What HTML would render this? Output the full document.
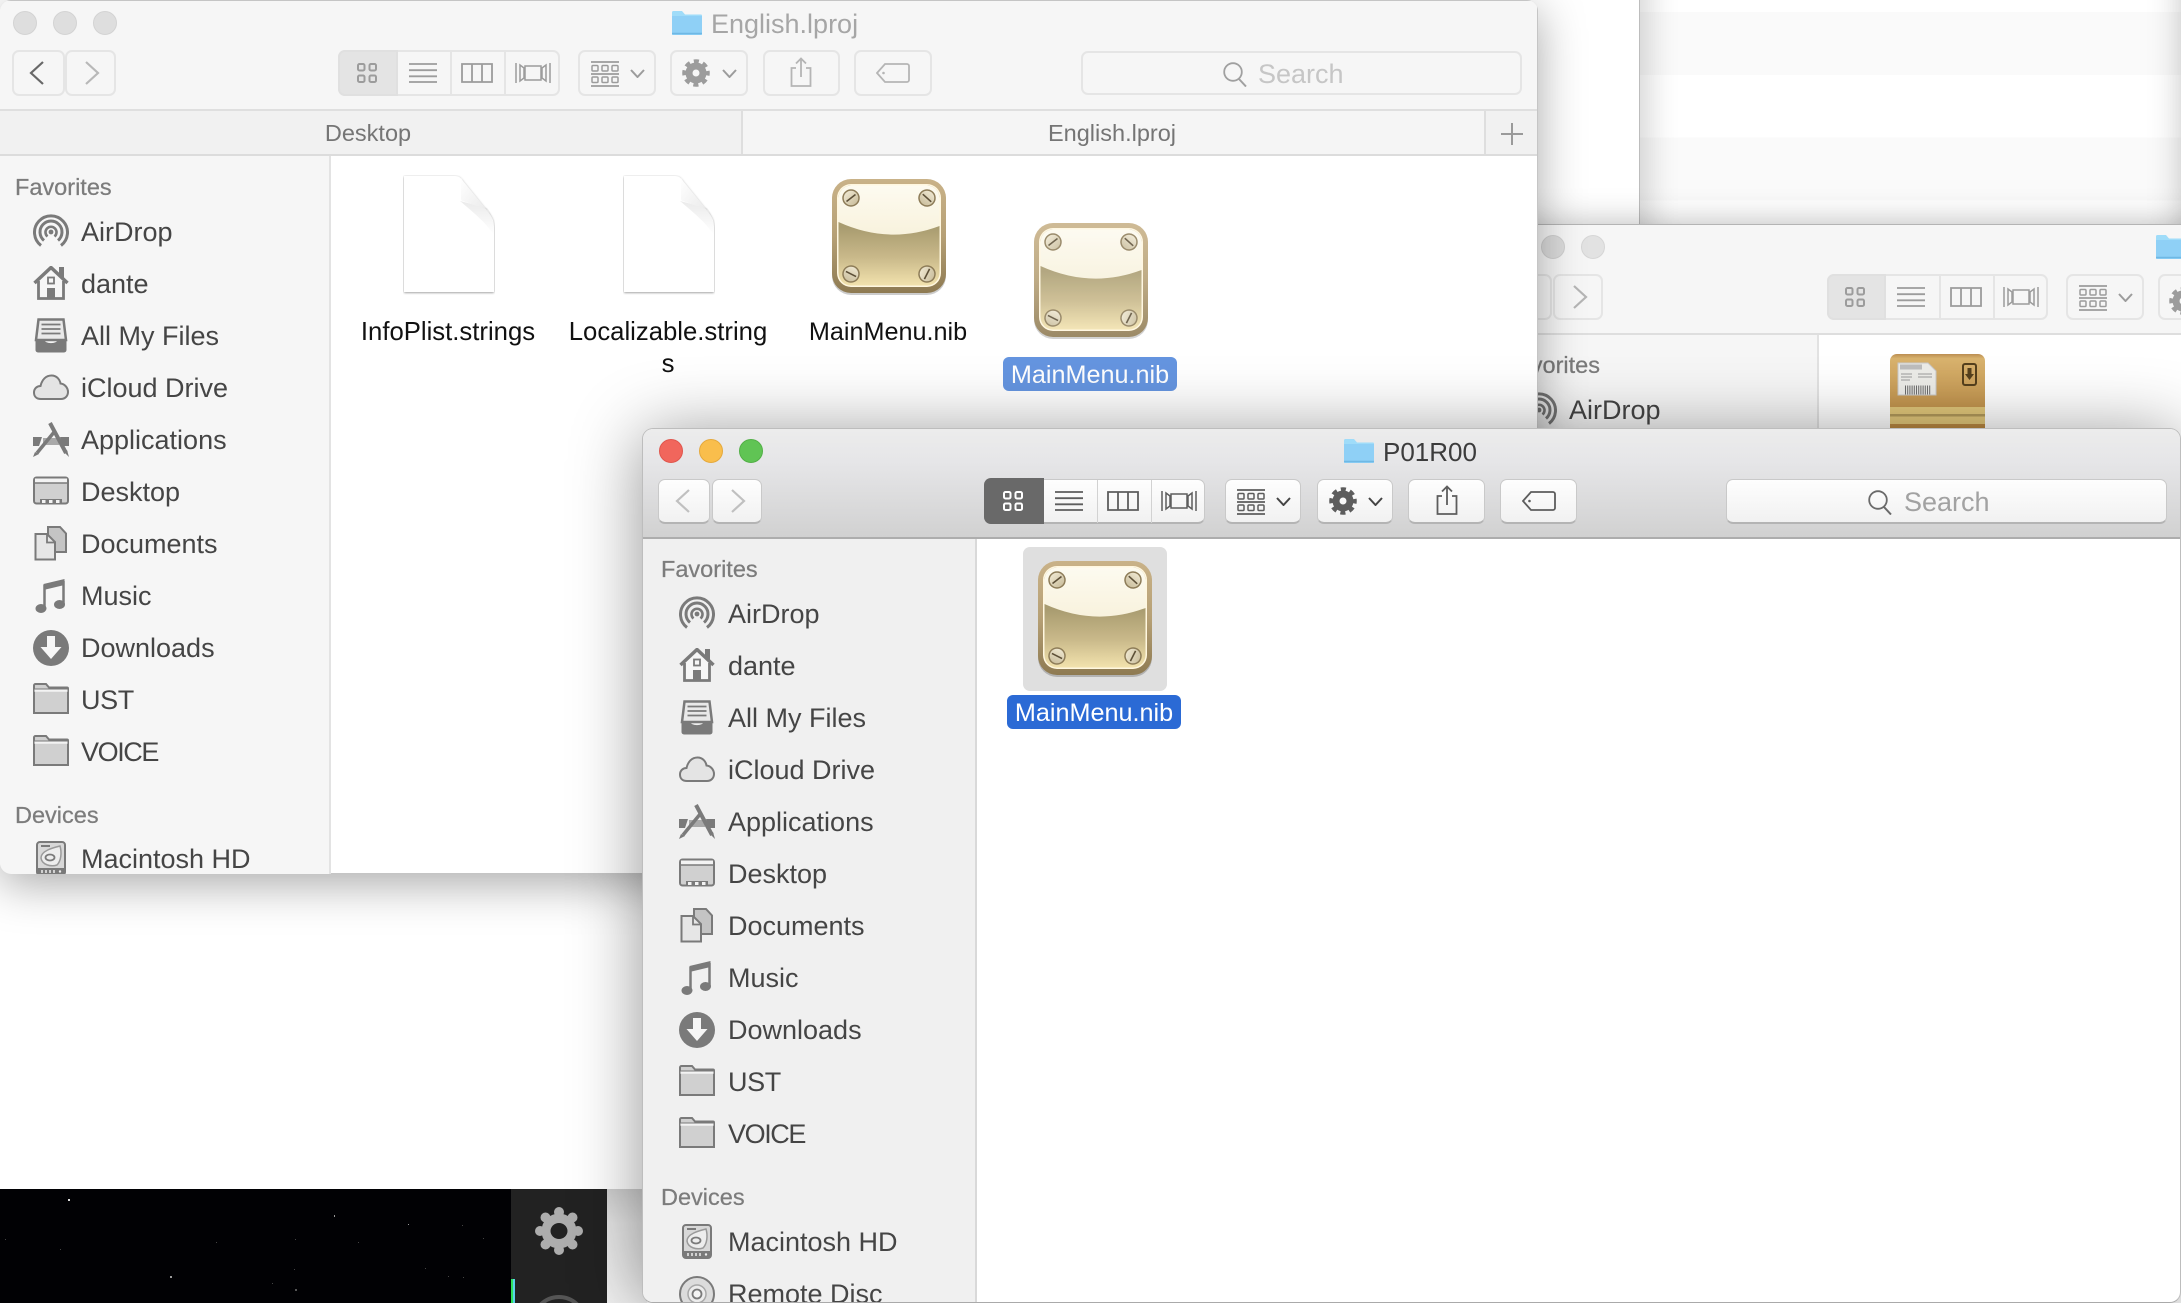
<!DOCTYPE html>
<html><head><meta charset="utf-8"><title>Finder</title>
<style>
html,body{margin:0;padding:0;background:#fff;width:2181px;height:1303px;overflow:hidden}
body{font-family:"Liberation Sans",sans-serif}
#root{position:absolute;left:0;top:0;width:2181px;height:1303px;overflow:hidden;background:#fff}
div,svg,span{box-sizing:border-box}
.a{position:absolute;display:block;overflow:visible}
.t{position:absolute;white-space:nowrap;line-height:36px;height:36px}
.c{transform:translateX(-50%)}
.frame{position:absolute;overflow:hidden;border-radius:11px}
.side{position:absolute;overflow:hidden}
.sec{position:absolute;font-size:23.5px;line-height:30px;color:#7c7c7c;-webkit-text-stroke:.25px #7c7c7c}
.rows{position:absolute;left:0;right:0}
.r{height:52px;position:relative;font-size:27px;line-height:52px;color:#454545;white-space:nowrap}
.r svg{position:absolute;width:36px;height:36px;top:8px;color:#7a7a7a;overflow:visible}
.r span{position:absolute;top:0}
.l1 svg{left:33px}.l1 span{left:81px}
.l3 svg{left:36px}.l3 span{left:85px}
.b{position:absolute;border-radius:7px;height:46px}
.i .b{background:#f6f6f6;border:2px solid #e5e5e5}
.f .b{background:linear-gradient(#fefefe,#f1f1f1);border:1px solid #c9c9c9;border-bottom:2px solid #b4b4b4;height:45px;top:479px}
.i{color:#9c9c9c}
.f{color:#5d5d5d}
</style></head><body><div id="root">
<svg width="0" height="0" style="position:absolute">
<defs>
<symbol id="grid" viewBox="0 0 20 20"><g fill="none" stroke="currentColor" stroke-width="2"><rect x="1" y="1" width="6.5" height="6.5" rx="1.5"/><rect x="12.5" y="1" width="6.5" height="6.5" rx="1.5"/><rect x="1" y="12.5" width="6.5" height="6.5" rx="1.5"/><rect x="12.5" y="12.5" width="6.5" height="6.5" rx="1.5"/></g></symbol>
<symbol id="list" viewBox="0 0 28 20"><path d="M0 1H28M0 7.200H28M0 13.300H28M0 19H28" stroke="currentColor" stroke-width="1.800" fill="none"/></symbol>
<symbol id="cols" viewBox="0 0 32 20"><path d="M1 1H31V19H1ZM11 1V19M21 1V19" stroke="currentColor" stroke-width="1.800" fill="none"/></symbol>
<symbol id="cov" viewBox="0 0 36 20"><path d="M10 3H26V17H10ZM1 0V20M5 2V18L9 15V5ZM35 0V20M31 2V18L27 15V5Z" stroke="currentColor" stroke-width="1.500" fill="none"/></symbol>
<symbol id="arr" viewBox="0 0 28 26"><path d="M0 1H28M0 13H28M0 25H28" stroke="currentColor" stroke-width="1.800" fill="none"/><g fill="none" stroke="currentColor" stroke-width="1.500"><rect x="1" y="4.500" width="6" height="5.500" rx="1"/><rect x="11" y="4.500" width="6" height="5.500" rx="1"/><rect x="21" y="4.500" width="6" height="5.500" rx="1"/><rect x="1" y="16" width="6" height="5.500" rx="1"/><rect x="11" y="16" width="6" height="5.500" rx="1"/><rect x="21" y="16" width="6" height="5.500" rx="1"/></g></symbol>
<symbol id="chev" viewBox="0 0 15 9"><path d="M1 1L7.500 8L14 1" stroke="currentColor" stroke-width="2" fill="none"/></symbol>
<symbol id="gear" viewBox="0 0 30 30"><circle cx="15" cy="15" r="7.500" fill="none" stroke="currentColor" stroke-width="7.500"/><circle cx="15" cy="15" r="12" fill="none" stroke="currentColor" stroke-width="5.500" stroke-dasharray="5.200 4.225" stroke-dashoffset="2.600"/></symbol>
<symbol id="share" viewBox="0 0 22 30"><path d="M6 11H1.500V29H20.500V11H16M11 1.500V20M6 6.500L11 1.500L16 6.500" stroke="currentColor" stroke-width="1.800" fill="none"/></symbol>
<symbol id="tag" viewBox="0 0 34 20"><path d="M9 1H31a2 2 0 0 1 2 2V17a2 2 0 0 1-2 2H9L1 10Z" stroke="currentColor" stroke-width="1.800" fill="none"/><circle cx="7.500" cy="10" r="1.300" fill="currentColor"/></symbol>
<symbol id="glass" viewBox="0 0 24 25"><circle cx="10" cy="10" r="8.800" fill="none" stroke="currentColor" stroke-width="1.800"/><path d="M16 17L23 24.500" stroke="currentColor" stroke-width="2" fill="none"/></symbol>
<symbol id="bk" viewBox="0 0 15 24"><path d="M14 1L2 12L14 23" stroke="currentColor" stroke-width="2.200" fill="none"/></symbol>
<symbol id="fw" viewBox="0 0 15 24"><path d="M1 1L13 12L1 23" stroke="currentColor" stroke-width="2.200" fill="none"/></symbol>
<symbol id="s-air" viewBox="0 0 36 36"><g fill="none" stroke="currentColor"><path stroke-width="3" d="M8 31.500A16.500 16.500 0 1 1 28 31.500"/><path stroke-width="3" d="M11 26.500A11 11 0 1 1 25 26.500"/><path stroke-width="2.600" d="M14.500 22.500A5.500 5.500 0 1 1 21.500 22.500"/></g><circle cx="18" cy="18" r="2.400" fill="currentColor"/></symbol>
<symbol id="s-home" viewBox="0 0 36 36"><path d="M26 1H31V12L26 7Z" fill="currentColor"/><path d="M5 16L18 3L31 16V33H5Z" fill="#f6f6f6"/><path d="M1.500 17L18 1.500L34.500 17" fill="none" stroke="currentColor" stroke-width="3.500"/><path d="M5.500 15V32.500H30.500V15" fill="none" stroke="currentColor" stroke-width="2.800"/><rect x="15" y="11.500" width="6" height="6" fill="none" stroke="currentColor" stroke-width="1.800"/><rect x="14" y="22" width="8" height="11" fill="currentColor"/></symbol>
<symbol id="s-all" viewBox="0 0 36 36"><path d="M5.500 1.500H30.500L33 22H3Z" fill="#e9e9e9" stroke="currentColor" stroke-width="2.500"/><path d="M8.500 6.500H27.500M8.500 11H27.500M8.500 15.500H27.500" stroke="currentColor" stroke-width="1.800"/><path d="M2.500 21H11C11 26.500 25 26.500 25 21H33.500V32a2.500 2.500 0 0 1-2.500 2.500H5A2.500 2.500 0 0 1 2.500 32Z" fill="currentColor"/></symbol>
<symbol id="s-cloud" viewBox="0 0 36 36"><path d="M8 29C3 29 1 26 1 22.500C1 18.500 4 16 7.500 16C9 9.500 13 5.500 18.500 5.500C24 5.500 27 10 27.500 13.500C32 14 35 18 35 22C35 26 32 29 28 29Z" fill="#e4e4e4" stroke="currentColor" stroke-width="2"/></symbol>
<symbol id="s-app" viewBox="0 0 36 36"><path d="M0 15H9L6 24H0ZM36 15H27L30 24H36Z" fill="currentColor"/><path d="M10 16H26V23H10Z" fill="#a9a9a9"/><path d="M17 1L33 31" stroke="currentColor" stroke-width="4" fill="none"/><path d="M22 9L4 31" stroke="currentColor" stroke-width="3.500" fill="none"/><path d="M31 30L36 35L34 28ZM2 30L0 35L6 32Z" fill="currentColor"/></symbol>
<symbol id="s-desk" viewBox="0 0 36 36"><rect x="1" y="3.500" width="34" height="26" rx="2.500" fill="#d0d0d0" stroke="currentColor" stroke-width="2"/><rect x="2" y="4.500" width="32" height="4" fill="#f3f3f3"/><path d="M2 9H34" stroke="currentColor" stroke-width="1.500"/><path d="M7 29.500V25H29V29.500Z" fill="currentColor"/><path d="M9 26H12.500V29H9ZM16 26H19.500V29H16ZM23 26H26.500V29H23Z" fill="#f3f3f3"/></symbol>
<symbol id="s-doc" viewBox="0 0 36 36"><path d="M15 1H27L33 7.500V26H15Z" fill="#c4c4c4" stroke="currentColor" stroke-width="2"/><path d="M2.500 8H14L22 16V33.500H2.500Z" fill="#e6e6e6" stroke="currentColor" stroke-width="2"/><path d="M14 8V16.500H22" fill="none" stroke="currentColor" stroke-width="1.800"/></symbol>
<symbol id="s-mus" viewBox="0 0 36 36"><path d="M10.500 6L31.500 1V7L10.500 12Z" fill="currentColor"/><path d="M11.500 7V30M30.500 3V26" stroke="currentColor" stroke-width="2.500" fill="none"/><ellipse cx="8" cy="30.500" rx="5.500" ry="4.500" fill="currentColor"/><ellipse cx="26.500" cy="26.500" rx="5.500" ry="4.500" fill="currentColor"/></symbol>
<symbol id="s-dl" viewBox="0 0 36 36"><circle cx="18" cy="18" r="18" fill="currentColor"/><path d="M14 6H22V17H28.500L18 29L7.500 17H14Z" fill="#f6f6f6"/></symbol>
<symbol id="s-fold" viewBox="0 0 36 36"><path d="M1 31V3.500A1.500 1.500 0 0 1 2.500 2H13L16 5.500H34a1 1 0 0 1 1 1V31Z" fill="#d0d0d0" stroke="currentColor" stroke-width="2"/><path d="M1.500 8.500H34.500" stroke="#f3f3f3" stroke-width="2.500"/><path d="M1 7H35" stroke="currentColor" stroke-width="1"/></symbol>
<symbol id="s-hd" viewBox="0 0 36 36"><path d="M7 1H29a3 3 0 0 1 3 3V31a3 3 0 0 1-3 3H7a3 3 0 0 1-3-3V4a3 3 0 0 1 3-3Z" fill="#d8d8d8" stroke="currentColor" stroke-width="2"/><path d="M8 5H17" stroke="currentColor" stroke-width="2"/><path d="M27 5C29 12 28 20 24 24C18 26 9 24 8 17C8 10 19 7 27 5Z" fill="#ededed" stroke="#9a9a9a" stroke-width="1.500"/><ellipse cx="17" cy="16.500" rx="4.500" ry="3" fill="none" stroke="currentColor" stroke-width="1.800"/><path d="M4 27H32V31a3 3 0 0 1-3 3H7a3 3 0 0 1-3-3Z" fill="currentColor"/><path d="M9 29V32M13 29V32M17 29V32M21 29V32" stroke="#eee" stroke-width="1.500"/><circle cx="27" cy="30.500" r="1.200" fill="#eee"/></symbol>
<symbol id="s-disc" viewBox="0 0 36 36"><circle cx="18" cy="18" r="17" fill="#dcdcdc" stroke="currentColor" stroke-width="2"/><circle cx="18" cy="18" r="9" fill="#ececec" stroke="#a8a8a8" stroke-width="1.500"/><circle cx="18" cy="18" r="4.500" fill="#f4f4f4" stroke="currentColor" stroke-width="1.800"/></symbol>
<symbol id="folder" viewBox="0 0 30 24"><path d="M0 23V1.500A1.500 1.500 0 0 1 1.500 0H10L13 3.500H29a1 1 0 0 1 1 1V23a1 1 0 0 1-1 1H1a1 1 0 0 1-1-1Z" fill="#9fdcf9"/><path d="M0 5H30V23a1 1 0 0 1-1 1H1a1 1 0 0 1-1-1Z" fill="#8fd0f6"/><path d="M0 22.500H30" stroke="#6fb8e4" stroke-width="1.500"/></symbol>
<linearGradient id="gRim" x1="0" y1="0" x2="0" y2="1"><stop offset="0" stop-color="#c9b288"/><stop offset=".5" stop-color="#b6a075"/><stop offset="1" stop-color="#8e7a52"/></linearGradient>
<linearGradient id="gLow" x1="0" y1="0" x2="0" y2="1"><stop offset="0" stop-color="#a4976b"/><stop offset=".42" stop-color="#a99c70"/><stop offset=".72" stop-color="#c9b98a"/><stop offset="1" stop-color="#f2e2ad"/></linearGradient>
<linearGradient id="gTop" x1="0" y1="0" x2="0" y2="1"><stop offset="0" stop-color="#fdfbf0"/><stop offset="1" stop-color="#f8f2dd"/></linearGradient>
<linearGradient id="gScrew" x1="0" y1="0" x2="1" y2="1"><stop offset="0" stop-color="#f5efdb"/><stop offset="1" stop-color="#c4b794"/></linearGradient>
<linearGradient id="gFold" x1="0" y1="0" x2="1" y2="1"><stop offset="0" stop-color="#fff"/><stop offset="1" stop-color="#e8e8e8"/></linearGradient>
<linearGradient id="gFS" x1="0" y1="0" x2="0" y2="1"><stop offset="0" stop-color="#000" stop-opacity=".08"/><stop offset="1" stop-color="#000" stop-opacity="0"/></linearGradient>
<symbol id="screw" viewBox="0 0 18 18"><circle cx="9" cy="9" r="8" fill="url(#gScrew)" stroke="#8d7c58" stroke-width="1.500"/><path d="M4.500 12.500L13.500 5.500" stroke="#5d5038" stroke-width="1.600"/></symbol>
<symbol id="nib" viewBox="0 0 114 118">
<rect x="0" y="2" width="114" height="114" rx="19" fill="#000" opacity=".2"/>
<rect x="0" y="0" width="114" height="114" rx="19" fill="url(#gRim)"/>
<rect x="5" y="5" width="104" height="103" rx="14" fill="#fff7df"/>
<rect x="6.500" y="6.500" width="101" height="100" rx="12.500" fill="url(#gLow)"/>
<path d="M6.500 19a12.500 12.500 0 0 1 12.500-12.500H95a12.500 12.500 0 0 1 12.500 12.500V47Q57 66 6.500 43Z" fill="url(#gTop)"/>
<use href="#screw" x="10" y="10" width="18" height="18"/>
<use href="#screw" x="86" y="10" width="18" height="18" transform="rotate(80 95 19)"/>
<use href="#screw" x="10" y="86" width="18" height="18" transform="rotate(65 19 95)"/>
<use href="#screw" x="86" y="86" width="18" height="18" transform="rotate(-25 95 95)"/>
</symbol>
<symbol id="page" viewBox="0 0 92 120"><path d="M1 1H52C56 1 58 3 60 6L86 38C90 43 91 47 91 53V117H1Z" fill="#fff" style="filter:drop-shadow(0 1px 1px rgba(0,0,0,.3)) drop-shadow(0 0 1px rgba(0,0,0,.12))"/><path d="M57 26L84 33C89 39 91 46 91 60C82 46 66 34 57 26Z" fill="url(#gFS)"/><path d="M58 3V24C58 25 59 26 60 26L85 35C86 36 86 37 87 39L60 6Z" fill="url(#gFold)"/></symbol>
</defs></svg>

<!-- striped background window -->
<div class="a" style="left:1639px;top:-20px;width:560px;height:250px;border-left:1px solid #bdbdbd;background:repeating-linear-gradient(#fafafa 0,#fafafa 63px,#fff 63px,#fff 125.500px);background-position:0 32px;box-shadow:inset 34px 0 30px -24px rgba(0,0,0,.16),inset -44px 0 36px -30px rgba(0,0,0,.28)"></div>

<!-- bottom-left dark panels -->
<div class="a" style="left:0;top:1189px;width:511px;height:114px;background:#010104"></div>
<div class="a" style="left:511px;top:1189px;width:96px;height:114px;background:#222"></div>
<div class="a" style="left:607px;top:1189px;width:40px;height:114px;background:linear-gradient(#cfcfcf,#e6e6e6 30%,#f2f2f2)"></div>
<svg class="a" style="left:0;top:1189px;width:511px;height:114px"><g fill="#9a9a9a"><rect x="68" y="10" width="2" height="2" fill="#ddd"/><rect x="334" y="26" width="1" height="2"/><rect x="170" y="87" width="2" height="2"/><rect x="295" y="100" width="2" height="2" fill="#555"/><rect x="408" y="35" width="1" height="1"/><rect x="5" y="50" width="1" height="1" fill="#444"/><rect x="60" y="60" width="1" height="1" fill="#444"/><rect x="216" y="53" width="1" height="1" fill="#444"/><rect x="295" y="50" width="1" height="1" fill="#444"/><rect x="358" y="53" width="1" height="1" fill="#444"/><rect x="462" y="36" width="1" height="1" fill="#444"/><rect x="483" y="49" width="1" height="1" fill="#444"/><rect x="272" y="94" width="1" height="1" fill="#444"/><rect x="448" y="87" width="1" height="1" fill="#444"/><rect x="463" y="88" width="1" height="1" fill="#444"/><rect x="294" y="80" width="1" height="1" fill="#444"/><rect x="425" y="79" width="1" height="1" fill="#444"/></g></svg>
<svg class="a" style="left:535px;top:1207px;width:48px;height:48px" viewBox="0 0 48 48"><g fill="#adadad"><circle cx="24" cy="24" r="17.500"/><circle cx="24" cy="5" r="5"/><circle cx="24" cy="43" r="5"/><circle cx="5" cy="24" r="5"/><circle cx="43" cy="24" r="5"/><circle cx="10.500" cy="10.500" r="5"/><circle cx="37.500" cy="10.500" r="5"/><circle cx="10.500" cy="37.500" r="5"/><circle cx="37.500" cy="37.500" r="5"/></g><ellipse cx="24" cy="24" rx="8.500" ry="8" fill="#222"/></svg>
<div class="a" style="left:511px;top:1279px;width:2px;height:24px;background:#2fe05a"></div>
<div class="a" style="left:513px;top:1279px;width:2px;height:24px;background:#56d4e8"></div>
<div class="a" style="left:531px;top:1295px;width:56px;height:56px;border:4px solid #555;border-radius:50%"></div>

<!-- window 2 (back right) -->
<div class="frame i" style="left:1480px;top:224px;width:730px;height:500px;background:#fff;border-top:1px solid #b4b4b4;box-shadow:0 0 34px rgba(0,0,0,.28)"></div>
<div class="i a" style="left:0;top:0;width:2181px;height:428px;overflow:hidden;color:#9c9c9c">
 <div class="a" style="left:1480px;top:225px;width:701px;height:110px;background:#f6f6f6;border-bottom:2px solid #dedede"></div>
 <div class="a" style="left:1480px;top:335px;width:339px;height:100px;background:#f6f6f6;border-right:2px solid #e2e2e2"></div>
 <div class="a" style="left:1541px;top:235px;width:24px;height:24px;border-radius:50%;background:#dcdcdc;border:1px solid #d0d0d0"></div>
 <div class="a" style="left:1581px;top:235px;width:24px;height:24px;border-radius:50%;background:#e2e2e2;border:1px solid #d6d6d6"></div>
 <svg class="a" style="left:2156px;top:235px;width:30px;height:24px"><use href="#folder"/></svg>
 <div class="b" style="left:1500px;top:274px;width:52px"></div>
 <div class="b" style="left:1553px;top:274px;width:50px"></div>
 <svg class="a" style="left:1573px;top:285px;width:15px;height:24px;color:#b5b5b5"><use href="#fw"/></svg>
 <div class="b" style="left:1827px;top:274px;width:221px"></div>
 <div class="a" style="left:1827px;top:274px;width:59px;height:46px;background:#e4e4e4;border:2px solid #e0e0e0;border-radius:7px 0 0 7px"></div>
 <div class="a" style="left:1939px;top:275px;width:2px;height:44px;background:#e5e5e5"></div>
 <div class="a" style="left:1993px;top:275px;width:2px;height:44px;background:#e5e5e5"></div>
 <svg class="a" style="left:1845px;top:287px;width:20px;height:20px"><use href="#grid"/></svg>
 <svg class="a" style="left:1897px;top:287px;width:28px;height:20px"><use href="#list"/></svg>
 <svg class="a" style="left:1950px;top:287px;width:32px;height:20px"><use href="#cols"/></svg>
 <svg class="a" style="left:2003px;top:287px;width:36px;height:20px"><use href="#cov"/></svg>
 <div class="b" style="left:2066px;top:274px;width:78px"></div>
 <svg class="a" style="left:2079px;top:285px;width:28px;height:26px"><use href="#arr"/></svg>
 <svg class="a" style="left:2118px;top:293px;width:15px;height:9px"><use href="#chev"/></svg>
 <div class="b" style="left:2158px;top:274px;width:76px"></div>
 <svg class="a" style="left:2169px;top:287px;width:28px;height:28px"><use href="#gear"/></svg>
 <div class="t" style="left:1538px;top:347px;width:70px;overflow:hidden;font-size:23.5px;color:#7c7c7c;-webkit-text-stroke:.25px #7c7c7c"><span style="position:absolute;right:8px">Favorites</span></div>
 <svg class="a" style="left:1521px;top:392px;width:36px;height:36px;color:#7a7a7a"><use href="#s-air"/></svg>
 <div class="t" style="left:1569px;top:392px;font-size:27px;color:#454545;background:#f6f6f6">AirDrop</div>
 <svg class="a" style="left:1890px;top:353px;width:95px;height:76px" viewBox="0 0 95 76"><defs><linearGradient id="bx" x1="0" y1="0" x2="0" y2="1"><stop offset="0" stop-color="#bb8d52"/><stop offset=".06" stop-color="#d9b36e"/><stop offset="1" stop-color="#b8863f"/></linearGradient></defs><path d="M0 8a7 7 0 0 1 7-7H88a7 7 0 0 1 7 7V76H0Z" fill="url(#bx)"/><rect x="0" y="54" width="95" height="17" fill="#e2c77a"/><rect x="0" y="61" width="95" height="2.500" fill="#b2995a"/><path d="M8 10H38L46 18V42H8Z" fill="#ecece8" stroke="#c8c8c8"/><rect x="10" y="11.500" width="22" height="5" fill="#bdbdbd"/><path d="M11 21H22M11 24H22M11 27H20M28 21H42M28 24H42" stroke="#9c9c9c" stroke-width="1"/><path d="M15 37H41" stroke="#6c6c6c" stroke-width="9" stroke-dasharray="1 1.200"/><rect x="73" y="11" width="13" height="21" rx="2" fill="none" stroke="#55401d" stroke-width="2"/><path d="M77.500 15H81.500V21H84L79.500 27L75 21H77.500Z" fill="#55401d"/></svg>
</div>

<!-- window 1 -->
<div class="frame i" style="left:0;top:0;width:1538px;height:874px;background:#fff;border:1px solid #c5c5c5;border-left:none;box-shadow:0 10px 46px rgba(0,0,0,.34)"></div>
<div class="i a" style="left:0;top:0;width:1538px;height:874px;overflow:hidden;border-radius:11px;color:#9c9c9c">
 <div class="a" style="left:0;top:1px;width:1537px;height:110px;background:#f6f6f6;border-bottom:2px solid #dfdfdf"></div>
 <div class="a" style="left:0;top:111px;width:1537px;height:45px;background:#f1f1f1;border-bottom:2px solid #dcdcdc"></div>
 <div class="a" style="left:741px;top:111px;width:745px;height:43px;background:#f5f5f5;border-left:2px solid #dedede;border-right:2px solid #dedede"></div>
 <div class="a" style="left:0;top:156px;width:331px;height:718px;background:#f6f6f6;border-right:2px solid #e3e3e3"></div>
 <div class="a" style="left:13px;top:11px;width:24px;height:24px;border-radius:50%;background:#dedede;border:1px solid #d3d3d3"></div>
 <div class="a" style="left:53px;top:11px;width:24px;height:24px;border-radius:50%;background:#dedede;border:1px solid #d3d3d3"></div>
 <div class="a" style="left:93px;top:11px;width:24px;height:24px;border-radius:50%;background:#dedede;border:1px solid #d3d3d3"></div>
 <svg class="a" style="left:672px;top:11px;width:30px;height:24px"><use href="#folder"/></svg>
 <div class="t" style="left:711px;top:6px;font-size:27px;color:#a6a6a6">English.lproj</div>
 <div class="b" style="left:12px;top:50px;width:53px"></div>
 <div class="b" style="left:65px;top:50px;width:51px"></div>
 <svg class="a" style="left:29px;top:61px;width:15px;height:24px;color:#686868"><use href="#bk"/></svg>
 <svg class="a" style="left:85px;top:61px;width:15px;height:24px;color:#b8b8b8"><use href="#fw"/></svg>
 <div class="b" style="left:338px;top:50px;width:222px"></div>
 <div class="a" style="left:338px;top:50px;width:60px;height:46px;background:#e4e4e4;border:2px solid #e0e0e0;border-radius:7px 0 0 7px"></div>
 <div class="a" style="left:450px;top:51px;width:2px;height:44px;background:#e5e5e5"></div>
 <div class="a" style="left:504px;top:51px;width:2px;height:44px;background:#e5e5e5"></div>
 <svg class="a" style="left:357px;top:63px;width:20px;height:20px"><use href="#grid"/></svg>
 <svg class="a" style="left:409px;top:63px;width:28px;height:20px"><use href="#list"/></svg>
 <svg class="a" style="left:461px;top:63px;width:32px;height:20px"><use href="#cols"/></svg>
 <svg class="a" style="left:515px;top:63px;width:36px;height:20px"><use href="#cov"/></svg>
 <div class="b" style="left:578px;top:50px;width:78px"></div>
 <svg class="a" style="left:591px;top:61px;width:28px;height:26px"><use href="#arr"/></svg>
 <svg class="a" style="left:630px;top:69px;width:15px;height:9px"><use href="#chev"/></svg>
 <div class="b" style="left:670px;top:50px;width:78px"></div>
 <svg class="a" style="left:682px;top:59px;width:28px;height:28px"><use href="#gear"/></svg>
 <svg class="a" style="left:722px;top:69px;width:15px;height:9px"><use href="#chev"/></svg>
 <div class="b" style="left:763px;top:50px;width:77px"></div>
 <svg class="a" style="left:790px;top:57px;width:22px;height:30px;color:#b5b5b5"><use href="#share"/></svg>
 <div class="b" style="left:854px;top:50px;width:78px"></div>
 <svg class="a" style="left:876px;top:63px;width:34px;height:20px;color:#b5b5b5"><use href="#tag"/></svg>
 <div class="b" style="left:1081px;top:51px;width:441px;height:44px"></div>
 <svg class="a" style="left:1223px;top:62px;width:24px;height:25px;color:#a0a0a0"><use href="#glass"/></svg>
 <div class="t" style="left:1258px;top:56px;font-size:27px;color:#c6c6c6">Search</div>
 <div class="t c" style="left:368px;top:115px;font-size:23.500px;color:#757575">Desktop</div>
 <div class="t c" style="left:1112px;top:115px;font-size:23.500px;color:#757575">English.lproj</div>
 <svg class="a" style="left:1501px;top:123px;width:22px;height:22px"><path d="M11 0V22M0 11H22" stroke="#9a9a9a" stroke-width="2"/></svg>

 <div class="side" style="left:0;top:157px;width:330px;height:717px">
  <div class="sec" style="left:15px;top:15px">Favorites</div>
  <div class="rows l1" style="top:49px">
   <div class="r"><svg><use href="#s-air"/></svg><span>AirDrop</span></div>
   <div class="r"><svg><use href="#s-home"/></svg><span>dante</span></div>
   <div class="r"><svg><use href="#s-all"/></svg><span>All My Files</span></div>
   <div class="r"><svg><use href="#s-cloud"/></svg><span>iCloud Drive</span></div>
   <div class="r"><svg><use href="#s-app"/></svg><span>Applications</span></div>
   <div class="r"><svg><use href="#s-desk"/></svg><span>Desktop</span></div>
   <div class="r"><svg><use href="#s-doc"/></svg><span>Documents</span></div>
   <div class="r"><svg><use href="#s-mus"/></svg><span>Music</span></div>
   <div class="r"><svg><use href="#s-dl"/></svg><span>Downloads</span></div>
   <div class="r"><svg><use href="#s-fold"/></svg><span style="letter-spacing:-.4px">UST</span></div>
   <div class="r"><svg><use href="#s-fold"/></svg><span style="letter-spacing:-1.400px">VOICE</span></div>
  </div>
  <div class="sec" style="left:15px;top:643px">Devices</div>
  <div class="rows l1" style="top:676px">
   <div class="r"><svg><use href="#s-hd"/></svg><span>Macintosh HD</span></div>
  </div>
 </div>

 <svg class="a" style="left:403px;top:175px;width:92px;height:120px"><use href="#page"/></svg>
 <svg class="a" style="left:623px;top:175px;width:92px;height:120px"><use href="#page"/></svg>
 <div class="t c" style="left:448px;top:314px;font-size:25.700px;color:#111">InfoPlist.strings</div>
 <div class="t c" style="left:668px;top:314px;font-size:25.700px;color:#111">Localizable.string</div>
 <div class="t c" style="left:668px;top:346px;font-size:25.700px;color:#111">s</div>
 <svg class="a" style="left:832px;top:179px;width:114px;height:118px"><use href="#nib"/></svg>
 <div class="t c" style="left:888px;top:314px;font-size:25.200px;color:#111">MainMenu.nib</div>
 <svg class="a" style="left:1034px;top:223px;width:114px;height:118px;opacity:.88"><use href="#nib"/></svg>
 <div class="a" style="left:1003px;top:357px;width:174px;height:34px;border-radius:6px;background:#6595e0"></div>
 <div class="t c" style="left:1090px;top:357px;font-size:25.200px;color:#fff">MainMenu.nib</div>
</div>

<!-- window 3 (front) -->
<div class="frame f" style="left:642px;top:428px;width:1539px;height:875px;background:#fff;border:1px solid #bdbdbd;border-bottom:1px solid #aaa;border-radius:11px;box-shadow:0 6px 70px rgba(0,0,0,.42)"></div>
<div class="f a" style="left:0;top:0;width:2181px;height:1303px;overflow:hidden;color:#5d5d5d">
 <div class="a" style="left:643px;top:429px;width:1537px;height:110px;background:linear-gradient(#ececec,#e6e6e8 30%,#d1d1d1);border-bottom:2px solid #adadad;border-radius:10px 10px 0 0"></div>
 <div class="side" style="left:643px;top:539px;width:334px;height:763px;background:#f0f0f0;border-right:2px solid #d9d9d9;border-radius:0 0 0 10px">
  <div class="sec" style="left:18px;top:15px">Favorites</div>
  <div class="rows l3" style="top:49px">
   <div class="r"><svg><use href="#s-air"/></svg><span>AirDrop</span></div>
   <div class="r"><svg><use href="#s-home"/></svg><span>dante</span></div>
   <div class="r"><svg><use href="#s-all"/></svg><span>All My Files</span></div>
   <div class="r"><svg><use href="#s-cloud"/></svg><span>iCloud Drive</span></div>
   <div class="r"><svg><use href="#s-app"/></svg><span>Applications</span></div>
   <div class="r"><svg><use href="#s-desk"/></svg><span>Desktop</span></div>
   <div class="r"><svg><use href="#s-doc"/></svg><span>Documents</span></div>
   <div class="r"><svg><use href="#s-mus"/></svg><span>Music</span></div>
   <div class="r"><svg><use href="#s-dl"/></svg><span>Downloads</span></div>
   <div class="r"><svg><use href="#s-fold"/></svg><span style="letter-spacing:-.4px">UST</span></div>
   <div class="r"><svg><use href="#s-fold"/></svg><span style="letter-spacing:-1.400px">VOICE</span></div>
  </div>
  <div class="sec" style="left:18px;top:643px">Devices</div>
  <div class="rows l3" style="top:677px">
   <div class="r"><svg><use href="#s-hd"/></svg><span>Macintosh HD</span></div>
   <div class="r"><svg><use href="#s-disc"/></svg><span>Remote Disc</span></div>
  </div>
 </div>
 <div class="a" style="left:659px;top:439px;width:24px;height:24px;border-radius:50%;background:#f1665c;border:1px solid #e0564d"></div>
 <div class="a" style="left:699px;top:439px;width:24px;height:24px;border-radius:50%;background:#f9be4c;border:1px solid #e5a93c"></div>
 <div class="a" style="left:739px;top:439px;width:24px;height:24px;border-radius:50%;background:#60c454;border:1px solid #52b046"></div>
 <svg class="a" style="left:1344px;top:439px;width:30px;height:24px"><use href="#folder"/></svg>
 <div class="t" style="left:1383px;top:434px;font-size:26px;color:#3c3c3c">P01R00</div>

 <div class="b" style="left:658px;width:52px"></div>
 <div class="b" style="left:712px;width:50px"></div>
 <svg class="a" style="left:675px;top:489px;width:15px;height:24px;color:#c0c0c0"><use href="#bk"/></svg>
 <svg class="a" style="left:731px;top:489px;width:15px;height:24px;color:#c0c0c0"><use href="#fw"/></svg>
 <div class="b" style="left:984px;width:221px"></div>
 <div class="a" style="left:984px;top:478px;width:60px;height:46px;background:#696969;border-radius:7px 0 0 7px"></div>
 <div class="a" style="left:1097px;top:480px;width:1px;height:43px;background:#d2d2d2"></div>
 <div class="a" style="left:1151px;top:480px;width:1px;height:43px;background:#d2d2d2"></div>
 <svg class="a" style="left:1003px;top:491px;width:20px;height:20px;color:#fff"><use href="#grid"/></svg>
 <svg class="a" style="left:1055px;top:491px;width:28px;height:20px"><use href="#list"/></svg>
 <svg class="a" style="left:1107px;top:491px;width:32px;height:20px"><use href="#cols"/></svg>
 <svg class="a" style="left:1161px;top:491px;width:36px;height:20px"><use href="#cov"/></svg>
 <div class="b" style="left:1225px;width:76px"></div>
 <svg class="a" style="left:1237px;top:489px;width:28px;height:26px"><use href="#arr"/></svg>
 <svg class="a" style="left:1276px;top:497px;width:15px;height:9px;color:#444"><use href="#chev"/></svg>
 <div class="b" style="left:1317px;width:76px"></div>
 <svg class="a" style="left:1329px;top:487px;width:28px;height:28px"><use href="#gear"/></svg>
 <svg class="a" style="left:1368px;top:497px;width:15px;height:9px;color:#444"><use href="#chev"/></svg>
 <div class="b" style="left:1408px;width:77px"></div>
 <svg class="a" style="left:1436px;top:485px;width:22px;height:30px"><use href="#share"/></svg>
 <div class="b" style="left:1500px;width:77px"></div>
 <svg class="a" style="left:1522px;top:491px;width:34px;height:20px"><use href="#tag"/></svg>
 <div class="b" style="left:1726px;width:441px"></div>
 <svg class="a" style="left:1868px;top:490px;width:24px;height:25px;color:#6a6a6a"><use href="#glass"/></svg>
 <div class="t" style="left:1904px;top:484px;font-size:27px;color:#a2a2a2">Search</div>

 <div class="a" style="left:1023px;top:547px;width:144px;height:144px;border-radius:7px;background:#dfdfdf"></div>
 <svg class="a" style="left:1038px;top:561px;width:114px;height:118px"><use href="#nib"/></svg>
 <div class="a" style="left:1007px;top:695px;width:174px;height:34px;border-radius:6px;background:#2b6ad5"></div>
 <div class="t c" style="left:1094px;top:695px;font-size:25.200px;color:#fff">MainMenu.nib</div>
</div>
</div></body></html>
